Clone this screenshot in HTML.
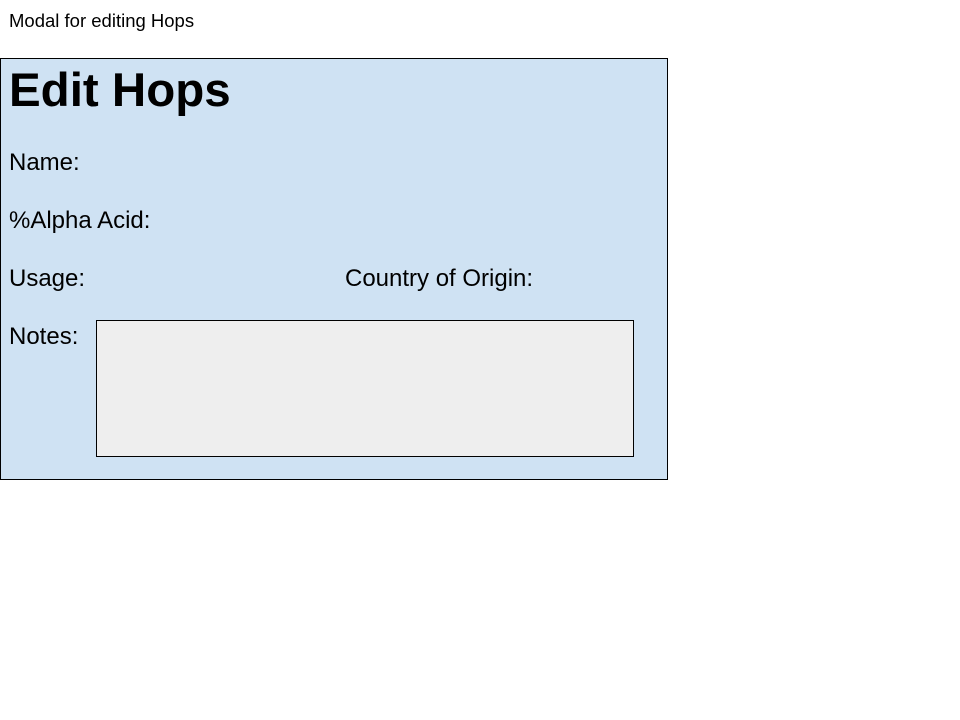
<!DOCTYPE html>
<html><head><style>
body{margin:0;width:960px;height:720px;background:#fff;font-family:"Liberation Sans",sans-serif;position:relative;overflow:hidden}
.t{position:absolute;white-space:nowrap;color:#000}
</style></head><body>
<div class="t" style="left:9px;top:10px;font-size:18.5px">Modal for editing Hops</div>
<div style="position:absolute;left:0;top:58px;width:666px;height:420px;background:#cfe2f3;border:1px solid #000"></div>
<div class="t" style="left:9px;top:63px;font-size:47.5px;font-weight:bold">Edit Hops</div>
<div class="t" style="left:9px;top:149px;font-size:24px">Name:</div>
<div class="t" style="left:9px;top:207px;font-size:24px">%Alpha Acid:</div>
<div class="t" style="left:9px;top:265px;font-size:24px">Usage:</div>
<div class="t" style="left:345px;top:265px;font-size:24px">Country of Origin:</div>
<div class="t" style="left:9px;top:323px;font-size:24px">Notes:</div>
<div style="position:absolute;left:96px;top:320px;width:536px;height:135px;background:#eeeeee;border:1px solid #000"></div>
</body></html>
